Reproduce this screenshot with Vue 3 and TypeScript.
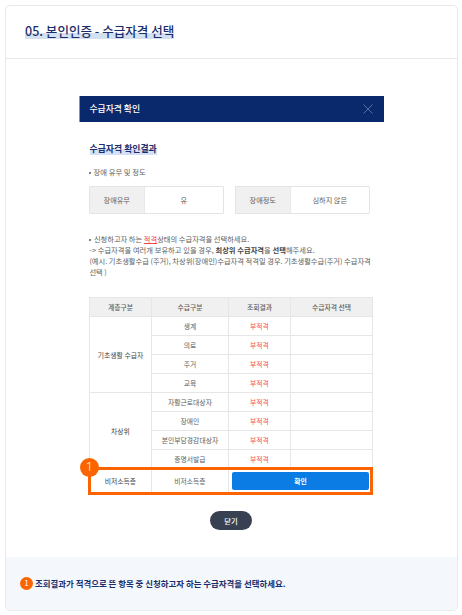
<script setup lang="ts">
interface Group {
  name: string
  items: string[]
}

const groups: Group[] = [
  { name: '기초생활 수급자', items: ['생계', '의료', '주거', '교육'] },
  { name: '차상위', items: ['자활근로대상자', '장애인', '본인부담경감대상자', '증명서발급'] },
]
const columns: string[] = ['계층구분', '수급구분', '조회결과', '수급자격 선택']
const facts = [
  { label: '장애유무', value: '유' },
  { label: '장애정도', value: '심하지 않은' },
]
</script>

<template>
  <main class="card">
    <header class="card-head">
      <h1><span>05. 본인인증 - 수급자격 선택</span></h1>
    </header>

    <section class="dialog">
      <div class="bar">
        <strong>수급자격 확인</strong>
        <svg class="x" viewBox="0 0 10 10"><path d="M.5 .5 9.5 9.5M9.5 .5 .5 9.5" /></svg>
      </div>
      <div class="body">
        <h2><span>수급자격 확인결과</span></h2>
        <p class="bullet sub">장애 유무 및 정도</p>
        <div class="facts">
          <dl v-for="f in facts" :key="f.label">
            <dt>{{ f.label }}</dt>
            <dd>{{ f.value }}</dd>
          </dl>
        </div>
        <div class="notes">
          <p class="bullet l1">신청하고자 하는 <em>적격</em>상태의 수급자격을 선택하세요.</p>
          <p class="l2">-&gt; 수급자격을 여러개 보유하고 있을 경우, <b>최상위 수급자격</b>을 <b>선택</b>해주세요.</p>
          <p class="l3">(예시. 기초생활수급 (주거), 차상위(장애인)수급자격 적격일 경우. 기초생활수급(주거) 수급자격</p>
          <p class="l4">선택 )</p>
        </div>
        <table>
          <colgroup><col class="c1" /><col class="c2" /><col class="c3" /><col class="c4" /></colgroup>
          <thead>
            <tr><th v-for="c in columns" :key="c">{{ c }}</th></tr>
          </thead>
          <tbody>
            <template v-for="g in groups" :key="g.name">
              <tr v-for="(item, i) in g.items" :key="item">
                <td v-if="i === 0" class="group" :rowspan="g.items.length">{{ g.name }}</td>
                <td>{{ item }}</td>
                <td class="bad">부적격</td>
                <td></td>
              </tr>
            </template>
            <tr class="last">
              <td class="group">
                비저소득층
                <div class="marker"><span class="num">1</span></div>
              </td>
              <td>비저소득층</td>
              <td colspan="2" class="action"><button class="ok">확인</button></td>
            </tr>
          </tbody>
        </table>
        <button class="close">닫기</button>
      </div>
    </section>

    <footer>
      <span class="num small">1</span>
      <p>조회결과가 적격으로 뜬 항목 중 신청하고자 하는 수급자격을 선택하세요.</p>
    </footer>
  </main>
</template>

<style>
body {
  background: #fff;
}
</style>

<style scoped>
* {
  box-sizing: border-box;
  margin: 0;
  padding: 0;
}
.card {
  display: flex;
  flex-direction: column;
  width: 453px;
  height: 606px;
  margin: 5px 0 0 5px;
  border: 1px solid #e9e9e9;
  border-radius: 5px;
  overflow: hidden;
  font-family: "Noto Sans CJK KR", "Noto Sans", sans-serif;
  color: #606060;
  white-space: nowrap;
}
.card-head {
  height: 53px;
  padding: 16px 0 0 19px;
  border-bottom: 1px solid #e9e9e9;
}
h1 {
  font-size: 12.55px;
  line-height: 18px;
  font-weight: 500;
  color: #1b2e6b;
}
h1 span {
  background: linear-gradient(transparent 11px, #d3e0f0 11px, #d3e0f0 17px, transparent 17px);
  display: inline-block;
}
.dialog {
  width: 305px;
  margin: 37px 0 0 73px;
  flex: 1;
}
.bar {
  display: flex;
  align-items: center;
  justify-content: space-between;
  height: 26px;
  padding: 0 11px 1px 10.5px;
  background: linear-gradient(90deg, #8494b5 1px, #0a296c 1px);
  color: #fff;
}
.bar strong {
  font-size: 8.8px;
  font-weight: 500;
}
.x {
  width: 10px;
  height: 10px;
  fill: none;
  stroke: #6d80ac;
  stroke-width: 0.8;
}
.body {
  padding-left: 10px;
}
h2 {
  padding: 19px 0 0 0.6px;
  font-size: 8.85px;
  line-height: 15px;
  font-weight: 700;
  color: #1b2e6b;
}
h2 span {
  display: inline-block;
  background: linear-gradient(transparent 8px, #d3e0f5 8px, #d3e0f5 14px, transparent 14px);
}
.bullet {
  display: flex;
  align-items: center;
  white-space: pre;
}
.bullet::before {
  content: "";
  width: 2px;
  height: 2px;
  margin: 1px 2.5px 0 0;
  background: #555;
  border-radius: 1px;
}
.sub {
  height: 12px;
  margin-top: 10px;
  font-size: 7.35px;
  line-height: 12px;
}
.facts {
  display: flex;
  gap: 11px;
  margin-top: 8px;
}
dl {
  display: flex;
  width: 135px;
  height: 28px;
  border: 1px solid #e4e4e4;
  border-radius: 1px;
  font-size: 7.2px;
  line-height: 27px;
  text-align: center;
}
dt {
  width: 54.5px;
  background: #f0f0f0;
  border-right: 1px solid #e9e9e9;
}
dd {
  flex: 1;
}
.notes {
  height: 63px;
  margin-top: 20px;
  padding-left: 0.4px;
  font-size: 7.26px;
  line-height: 11px;
}
.l2 {
  letter-spacing: 0.04px;
}
em {
  font-style: normal;
  color: #f04444;
  text-decoration: underline;
  text-underline-offset: 1px;
}
b {
  font-weight: 700;
  color: #444;
}
table {
  width: 284px;
  table-layout: fixed;
  border-collapse: separate;
  border-spacing: 0;
  border-left: 1px solid #e6e6e6;
  border-top: 1px solid #e6e6e6;
  font-size: 6.8px;
  line-height: 12px;
}
.c1 {
  width: 62px;
}
.c2 {
  width: 77px;
}
.c3 {
  width: 62px;
}
th,
td {
  height: 19px;
  border-right: 1px solid #e6e6e6;
  border-bottom: 1px solid #e6e6e6;
  font-weight: 400;
  text-align: center;
  vertical-align: middle;
}
th {
  background: #f0f0f0;
  font-weight: 500;
  color: #606060;
}
.group {
  color: #444;
}
.bad {
  color: #fa5050;
}
.last td {
  height: 25px;
}
.last .group {
  position: relative;
}
.marker {
  position: absolute;
  left: -2px;
  top: -2px;
  width: 285px;
  height: 28px;
  border: 3px solid #fb6400;
}
.num {
  display: block;
  border-radius: 50%;
  background: #fb6400;
  color: #fff;
  text-align: center;
}
.marker .num {
  position: absolute;
  left: -11px;
  top: -12px;
  width: 19px;
  height: 19px;
  font-family: "Open Sans", "Noto Sans", sans-serif;
  font-weight: 300;
  font-size: 12px;
  line-height: 18px;
}
td.action {
  padding: 0 3px;
}
.ok {
  position: relative;
  display: block;
  width: 137px;
  height: 18px;
  border: 0;
  border-radius: 2px;
  background: #0c7ce5;
  color: #fff;
  font: 700 6.8px/18px "Noto Sans CJK KR", sans-serif;
}
.close {
  display: block;
  width: 42px;
  height: 19px;
  margin: 17px 0 0 121px;
  border: 0;
  border-radius: 10px;
  background: #374151;
  color: #fff;
  font: 500 7.3px/18px "Noto Sans CJK KR", sans-serif;
}
footer {
  display: flex;
  align-items: center;
  height: 53px;
  padding: 0 0 1px 14px;
  background: #f4f8fc;
  color: #1b2e6b;
  font-size: 8.44px;
  font-weight: 700;
}
.small {
  width: 13px;
  height: 13px;
  margin-right: 2px;
  font-size: 8px;
  line-height: 12px;
  font-weight: 400;
}
</style>
